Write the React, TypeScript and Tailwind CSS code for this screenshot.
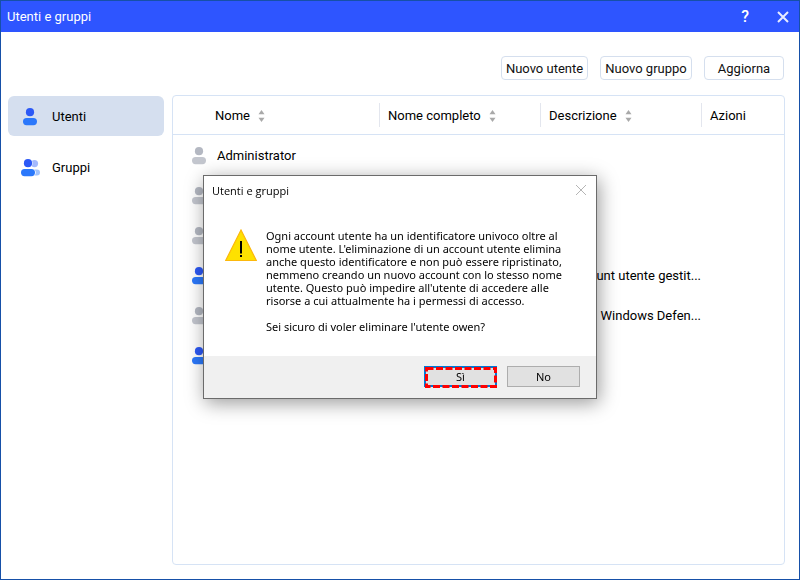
import { useState } from "react";

interface Account {
  id: number;
  name?: string;
  description?: string;
  enabled: boolean;
}

const accounts: Account[] = [
  { id: 1, name: "Administrator", enabled: false },
  { id: 2, enabled: false },
  { id: 3, enabled: false },
  { id: 4, description: "Account utente gestit...", enabled: true },
  { id: 5, description: "Windows Defen...", enabled: false },
  { id: 6, enabled: true },
];

const columns = [
  { label: "Nome", className: "w-[206px] pl-[42px]", sortable: true, divider: false },
  { label: "Nome completo", className: "w-[161px]", sortable: true, divider: true },
  { label: "Descrizione", className: "w-[161px]", sortable: true, divider: true },
  { label: "Azioni", className: "", sortable: false, divider: true },
];

function UserIcon({ muted = false }: { muted?: boolean }) {
  return (
    <svg width="14" height="18" viewBox="0 0 14 18" aria-hidden="true">
      <circle cx="7" cy="4.2" r="4.1" fill={muted ? "#b4b8c2" : "#2c59f6"} />
      <rect x="0" y="10" width="14" height="7.2" rx="3.6" fill={muted ? "#c3c6ce" : "#2b78fb"} />
    </svg>
  );
}

function GroupIcon() {
  return (
    <svg width="18" height="18" viewBox="0 0 18 18" overflow="visible" aria-hidden="true">
      <circle cx="13.5" cy="4.6" r="3.6" fill="#a3b9fd" />
      <rect x="8" y="10.4" width="11" height="6" rx="3" fill="#a3c4fd" />
      <circle cx="7" cy="4.2" r="4.6" fill="#fff" />
      <rect x="0" y="9.4" width="14.8" height="8.4" rx="4.2" fill="#fff" />
      <circle cx="7" cy="4.2" r="4.1" fill="#2c59f6" />
      <rect x="0" y="10" width="14" height="7.2" rx="3.6" fill="#2b78fb" />
    </svg>
  );
}

function SortIcon() {
  return (
    <svg width="7" height="12" viewBox="0 0 7 12" fill="#a9a9a9" aria-hidden="true">
      <path d="M3.5 0L6.5 4.2H0.5Z" />
      <path d="M3.5 12L6.5 7.8H0.5Z" />
    </svg>
  );
}

function WarningIcon() {
  return (
    <svg width="32" height="33" viewBox="0 0 32 33" className="shrink-0" aria-hidden="true">
      <path d="M16 1L31.3 31.5H0.7Z" fill="#fee100" stroke="#fcb80c" strokeWidth="1.2" />
      <path d="M16 12V24.5" stroke="#000" strokeWidth="2" />
      <path d="M16 26V28" stroke="#000" strokeWidth="2" />
    </svg>
  );
}

function ConfirmDialog({ onClose }: { onClose: () => void }) {
  return (
    <div className="fixed inset-0 z-50 flex items-center justify-center pb-1.5 text-black">
      <div
        role="dialog"
        aria-labelledby="dialog-title"
        className="w-[394px] border border-[#6b6b6b] bg-white shadow-[2px_4px_18px_rgba(0,0,0,0.4)]"
      >
        <div className="flex h-7 items-center justify-between pl-2 pr-2.5">
          <h2
            id="dialog-title"
            className="pt-0.5 font-['Open_Sans','Noto_Sans',sans-serif] text-[11px]"
          >
            Utenti e gruppi
          </h2>
          <button type="button" onClick={onClose} aria-label="Chiudi">
            <svg width="10" height="10" viewBox="0 0 10 10" stroke="#b5b5b5" aria-hidden="true">
              <path d="M0 0L10 10M10 0L0 10" />
            </svg>
          </button>
        </div>

        <div className="flex gap-[9px] px-[21px] pb-[23px] pt-[25px]">
          <WarningIcon />
          <div className="whitespace-nowrap font-['Noto_Sans',sans-serif] text-[11px] leading-[13px]">
            <p>
              Ogni account utente ha un identificatore univoco oltre al
              <br />
              nome utente. L'eliminazione di un account utente elimina
              <br />
              anche questo identificatore e non può essere ripristinato,
              <br />
              nemmeno creando un nuovo account con lo stesso nome
              <br />
              utente. Questo può impedire all'utente di accedere alle
              <br />
              risorse a cui attualmente ha i permessi di accesso.
            </p>
            <p className="mt-[13px]">Sei sicuro di voler eliminare l'utente owen?</p>
          </div>
        </div>

        <div className="flex justify-end gap-2.5 bg-[#f0f0f0] px-4 pb-[11px] pt-2.5 font-['Noto_Sans',sans-serif] text-[11px]">
          <button
            type="button"
            onClick={onClose}
            className="relative h-[21px] w-[73px] border-2 border-[#0078d7] bg-[#e1e1e1] leading-[17px]"
          >
            Sì
            <svg
              width="72"
              height="21"
              viewBox="0 0 72 21"
              className="absolute -left-px -top-px max-w-none"
              fill="none"
              aria-hidden="true"
            >
              <rect
                x="1.5"
                y="1.5"
                width="69"
                height="18"
                stroke="#fe0000"
                strokeWidth="3"
                strokeDasharray="7 2.5"
              />
            </svg>
          </button>
          <button
            type="button"
            onClick={onClose}
            className="h-[21px] w-[73px] border border-[#adadad] bg-[#e1e1e1] pt-px"
          >
            No
          </button>
        </div>
      </div>
    </div>
  );
}

export default function App() {
  const [section, setSection] = useState("utenti");
  const [dialogOpen, setDialogOpen] = useState(true);

  const tab = "flex h-10 w-full items-center rounded-md pt-px text-left";
  const toolbarButton = "h-6 rounded border border-[#d5dfee] pt-px text-[#111]";

  return (
    <div className="flex min-h-screen flex-col border border-[#1650a8] bg-white font-[Roboto,sans-serif] text-[13px] text-black">
      <header className="flex h-[31px] items-center justify-between bg-[#2e55ff] pl-1.5 pr-2.5 text-white">
        <h1>Utenti e gruppi</h1>
        <div className="flex items-center gap-7">
          <button type="button" className="text-base font-medium" aria-label="Guida">
            ?
          </button>
          <button type="button" aria-label="Chiudi finestra">
            <svg
              width="12"
              height="12"
              viewBox="0 0 12 12"
              stroke="#e8ecff"
              strokeWidth="2"
              aria-hidden="true"
            >
              <path d="M1 1L11 11M11 1L1 11" />
            </svg>
          </button>
        </div>
      </header>

      <div className="flex justify-end gap-3 px-[15px] pb-[15px] pt-6">
        <button type="button" className={`${toolbarButton} w-[87px]`}>
          Nuovo utente
        </button>
        <button type="button" className={`${toolbarButton} w-[92px]`}>
          Nuovo gruppo
        </button>
        <button type="button" className={`${toolbarButton} w-20`}>
          Aggiorna
        </button>
      </div>

      <div className="flex flex-1 gap-2 pb-3.5 pl-[7px] pr-3.5">
        <nav className="flex w-[156px] flex-col gap-[11px] pt-px">
          <button
            type="button"
            onClick={() => setSection("utenti")}
            className={`${tab} ${section === "utenti" ? "bg-[#d5dfef]" : ""}`}
          >
            <span className="flex w-11 justify-center">
              <UserIcon />
            </span>
            Utenti
          </button>
          <button
            type="button"
            onClick={() => setSection("gruppi")}
            className={`${tab} ${section === "gruppi" ? "bg-[#d5dfef]" : ""}`}
          >
            <span className="flex w-11 justify-center">
              <GroupIcon />
            </span>
            Gruppi
          </button>
        </nav>

        <main className="min-w-0 flex-1 rounded border border-[#d6e3f5]">
          <table className="w-full table-fixed border-separate border-spacing-0">
            <thead>
              <tr>
                {columns.map((col) => (
                  <th
                    key={col.label}
                    className={`h-[39px] border-b border-[#d6e3f5] p-0 text-left font-normal ${col.className}`}
                  >
                    <span
                      className={`flex h-6 items-center gap-2 pt-px ${
                        col.divider ? "border-l border-[#e3e6ee] pl-2" : ""
                      }`}
                    >
                      {col.label}
                      {col.sortable && <SortIcon />}
                    </span>
                  </th>
                ))}
              </tr>
            </thead>
            <tbody>
              {accounts.map((account) => (
                <tr key={account.id}>
                  <td className="h-10 p-0 pl-[19px] pt-0.5">
                    <span className="flex items-center gap-[11px]">
                      <UserIcon muted={!account.enabled} />
                      {account.name}
                    </span>
                  </td>
                  <td />
                  <td className="whitespace-nowrap p-0 pt-0.5 text-right">
                    {account.description}
                  </td>
                  <td />
                </tr>
              ))}
            </tbody>
          </table>
        </main>
      </div>

      {dialogOpen && <ConfirmDialog onClose={() => setDialogOpen(false)} />}
    </div>
  );
}
